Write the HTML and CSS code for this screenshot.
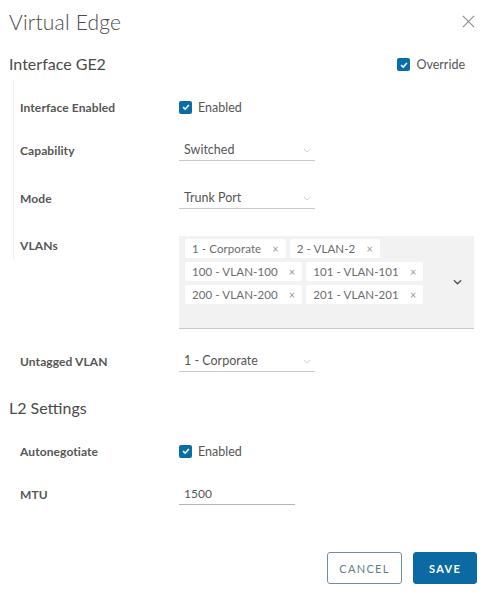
FILE: index.html
```html
<!DOCTYPE html>
<html>
<head>
<meta charset="utf-8">
<link rel="stylesheet" href="styles.css">
</head>
<body>
<div class="modal">
  <div class="modal-header">
    <h1 class="title">Virtual Edge</h1>
    <svg class="close" viewBox="0 0 14 14" width="13" height="13"><path d="M1 1 L13 13 M13 1 L1 13" stroke="#8c8c8c" stroke-width="1.2" fill="none"/></svg>
  </div>

  <div class="section-head">
    <h2 class="section-title">Interface GE2</h2>
    <label class="check"><span class="box"><svg viewBox="0 0 12 12" width="10" height="10"><path d="M2.5 6.2 L5 8.5 L9.5 3.5" stroke="#fff" stroke-width="1.8" fill="none"/></svg></span><span class="check-text">Override</span></label>
  </div>

  <div class="section-body lined">
    <div class="row row-1">
      <div class="label">Interface Enabled</div>
      <label class="check"><span class="box"><svg viewBox="0 0 12 12" width="10" height="10"><path d="M2.5 6.2 L5 8.5 L9.5 3.5" stroke="#fff" stroke-width="1.8" fill="none"/></svg></span><span class="check-text">Enabled</span></label>
    </div>
    <div class="row row-2">
      <div class="label">Capability</div>
      <div class="select"><span>Switched</span><svg class="chev" viewBox="0 0 10 6" width="8" height="5"><path d="M1 1 L5 5 L9 1" stroke="#c4c4c4" stroke-width="1" fill="none"/></svg></div>
    </div>
    <div class="row row-3">
      <div class="label">Mode</div>
      <div class="select"><span>Trunk Port</span><svg class="chev" viewBox="0 0 10 6" width="8" height="5"><path d="M1 1 L5 5 L9 1" stroke="#c4c4c4" stroke-width="1" fill="none"/></svg></div>
    </div>
    <div class="row row-vlan">
      <div class="label label-top">VLANs</div>
      <div class="multi">
        <div class="tags">
          <span class="tag">1 - Corporate<i>×</i></span>
          <span class="tag">2 - VLAN-2<i>×</i></span>
          <span class="tag">100 - VLAN-100<i>×</i></span>
          <span class="tag">101 - VLAN-101<i>×</i></span>
          <span class="tag">200 - VLAN-200<i>×</i></span>
          <span class="tag">201 - VLAN-201<i>×</i></span>
        </div>
        <svg class="multi-chev" viewBox="0 0 10 6" width="9" height="6"><path d="M1 1 L5 5 L9 1" stroke="#555" stroke-width="1.6" fill="none"/></svg>
      </div>
    </div>
    <div class="row row-untagged">
      <div class="label">Untagged VLAN</div>
      <div class="select"><span>1 - Corporate</span><svg class="chev" viewBox="0 0 10 6" width="8" height="5"><path d="M1 1 L5 5 L9 1" stroke="#c4c4c4" stroke-width="1" fill="none"/></svg></div>
    </div>
  </div>

  <div class="section-head section-head-2">
    <h2 class="section-title">L2 Settings</h2>
  </div>
  <div class="section-body">
    <div class="row row-auto">
      <div class="label">Autonegotiate</div>
      <label class="check"><span class="box"><svg viewBox="0 0 12 12" width="10" height="10"><path d="M2.5 6.2 L5 8.5 L9.5 3.5" stroke="#fff" stroke-width="1.8" fill="none"/></svg></span><span class="check-text">Enabled</span></label>
    </div>
    <div class="row row-mtu">
      <div class="label">MTU</div>
      <div class="input">1500</div>
    </div>
  </div>

  <div class="footer">
    <button class="btn btn-outline">CANCEL</button>
    <button class="btn btn-primary">SAVE</button>
  </div>
</div>
</body>
</html>
```

FILE: styles.css
```css
* { box-sizing: border-box; }
html, body { margin: 0; padding: 0; background: #fff; }
body { font-family: "Lato", "Liberation Sans", sans-serif; color: #565656; }

.modal { width: 490px; height: 601px; padding: 0 13px 0 9px; }

.modal-header { display: flex; justify-content: space-between; align-items: center; height: 42px; padding-top: 0; }
.title { margin: 0; font-size: 21px; font-weight: 300; color: #4a4a4a; letter-spacing: 0.2px; }
.close { margin-right: 2px; margin-top: 1px; }

.section-head { display: flex; justify-content: space-between; align-items: center; height: 25px; margin-top: 9px; }
.section-title { margin: 0; font-size: 16px; font-weight: 400; color: #4a4a4a; }
.section-head .check { margin-right: 12px; margin-top: 2px; }

.check { display: flex; align-items: center; gap: 6px; font-size: 12.5px; color: #565656; }
.box { width: 13px; height: 13px; border-radius: 2px; background: #0a6ea6; display: flex; align-items: center; justify-content: center; }

.section-body { position: relative; padding-left: 11px; }
.lined::before { content: ""; position: absolute; left: 4px; top: -12px; width: 1px; height: 180px; background: #efefef; }

.row { display: grid; grid-template-columns: 159px 1fr; align-items: center; }
.label { font-size: 12px; font-weight: 700; color: #565656; letter-spacing: 0.1px; }
.label-top { align-self: start; line-height: 20px; }

.row-1 { height: 32px; margin-top: 15px; }
.row-2 { height: 32px; margin-top: 11px; }
.row-3 { height: 32px; margin-top: 16px; }
.row-vlan { margin-top: 22px; }
.row-untagged { height: 32px; margin-top: 16px; }

.select { width: 136px; height: 22px; border-bottom: 1px solid #c8c8c8; display: flex; align-items: center; justify-content: space-between; padding: 0 4px 0 5px; font-size: 12.5px; color: #565656; }
.chev { margin-top: 1px; }

.multi { width: 295px; height: 93px; background: #f2f2f2; border-bottom: 1px solid #c8c8c8; display: flex; justify-content: space-between; align-items: center; padding: 3px 12px 0 6px; }
.multi .tags { align-self: flex-start; width: 245px; display: flex; flex-wrap: wrap; gap: 4px 4px; }
.tag { background: #fff; height: 19px; line-height: 19px; padding: 0 7px 0 7px; font-size: 11.5px; letter-spacing: 0.1px; color: #6b6b6b; display: inline-flex; align-items: center; border-radius: 2px; }
.tag i { font-style: normal; font-size: 11px; color: #999; margin-left: 11px; }
.multi-chev { margin-top: -3px; }

.section-head-2 { margin-top: 18px; }
.row-auto { height: 32px; margin-top: 15px; }
.row-mtu { height: 32px; margin-top: 11px; }
.input { width: 116px; height: 22px; border-bottom: 1px solid #b5b5b5; display: flex; align-items: center; padding-left: 5px; font-size: 12px; color: #565656; }

.footer { display: flex; justify-content: flex-end; gap: 11px; margin-top: 42px; }
.btn { height: 32px; font-family: "Lato", "Liberation Sans", sans-serif; font-size: 11px; letter-spacing: 1.3px; border-radius: 3px; cursor: pointer; }
.btn-outline { width: 75px; background: #fff; border: 1px solid #6f8f9e; color: #5f7e8c; font-weight: 400; }
.btn-primary { width: 64px; background: #0a6aa1; border: 1px solid #0a6aa1; color: #fff; font-weight: 700; }
```
